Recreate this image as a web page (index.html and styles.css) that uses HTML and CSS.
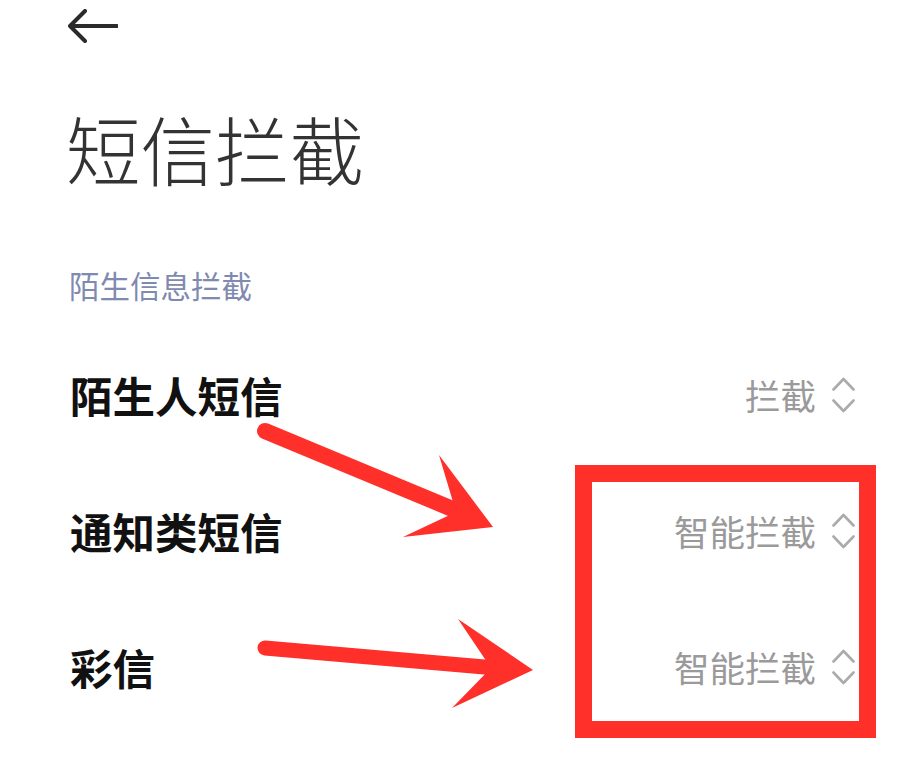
FILE: index.html
```html
<!DOCTYPE html>
<html lang="zh-CN">
<head>
<meta charset="utf-8">
<title>短信拦截</title>
<link rel="stylesheet" href="styles.css">
</head>
<body>
<div class="page">
  <div class="header">
    <svg class="back" width="50" height="34" viewBox="0 0 50 34">
      <path d="M17 2 L2 17 L17 32 M2 17 H49" fill="none" stroke="#2b2b2b" stroke-width="4" stroke-linecap="round" stroke-linejoin="round"/>
    </svg>
  </div>
  <h1 class="title">短信拦截</h1>
  <div class="section">陌生信息拦截</div>
  <div class="list">
    <div class="row">
      <span class="label">陌生人短信</span>
      <span class="value">拦截<svg class="chev" width="24" height="36" viewBox="0 0 24 36"><path d="M1.5 12.5 L11.5 2 L21.5 12.5 M1.5 23.5 L11.5 34 L21.5 23.5" fill="none" stroke="#ababab" stroke-width="2.6" stroke-linecap="round" stroke-linejoin="round"/></svg></span>
    </div>
    <div class="row">
      <span class="label">通知类短信</span>
      <span class="value">智能拦截<svg class="chev" width="24" height="36" viewBox="0 0 24 36"><path d="M1.5 12.5 L11.5 2 L21.5 12.5 M1.5 23.5 L11.5 34 L21.5 23.5" fill="none" stroke="#ababab" stroke-width="2.6" stroke-linecap="round" stroke-linejoin="round"/></svg></span>
    </div>
    <div class="row">
      <span class="label">彩信</span>
      <span class="value">智能拦截<svg class="chev" width="24" height="36" viewBox="0 0 24 36"><path d="M1.5 12.5 L11.5 2 L21.5 12.5 M1.5 23.5 L11.5 34 L21.5 23.5" fill="none" stroke="#ababab" stroke-width="2.6" stroke-linecap="round" stroke-linejoin="round"/></svg></span>
    </div>
  </div>
  <div class="highlight"></div>
  <svg class="annot" width="923" height="765" viewBox="0 0 923 765">
    <line x1="265" y1="431" x2="462" y2="513" stroke="#ff2f2a" stroke-width="16" stroke-linecap="round"/>
    <polygon points="439,455 493,527 403,537 456,512" fill="#ff2f2a"/>
    <line x1="265" y1="648" x2="496" y2="668" stroke="#ff2f2a" stroke-width="15" stroke-linecap="round"/>
    <polygon points="458,619 533,670 452,708 491,668" fill="#ff2f2a"/>
  </svg>
</div>
</body>
</html>
```
FILE: styles.css
```css
html, body {
  margin: 0;
  padding: 0;
  background: #ffffff;
}
body {
  font-family: "Noto Sans CJK SC", "Noto Sans", sans-serif;
  width: 923px;
  height: 765px;
  overflow: hidden;
}
.page {
  position: relative;
  width: 923px;
  height: 765px;
  box-sizing: border-box;
  padding: 0 67px 0 68px;
}
.header {
  padding-top: 9px;
  height: 34px;
}
.back {
  display: block;
}
.title {
  margin: 65px 0 0 -2px;
  font-size: 74.5px;
  line-height: 80px;
  font-weight: 300;
  color: #333333;
}
.section {
  margin-top: 77px;
  font-size: 30.5px;
  line-height: 40px;
  color: #7f8ab0;
  padding-left: 1px;
}
.list {
  margin-top: 22px;
}
.row {
  height: 136px;
  display: flex;
  align-items: center;
  justify-content: space-between;
}
.label {
  font-size: 42.5px;
  line-height: 50px;
  font-weight: 700;
  color: #111111;
  padding-left: 2px;
}
.value {
  display: flex;
  align-items: center;
  gap: 16px;
  font-size: 35.5px;
  line-height: 44px;
  color: #9a9a9a;
}
.chev {
  display: block;
}
.highlight {
  position: absolute;
  left: 575px;
  top: 465px;
  width: 301px;
  height: 273px;
  box-sizing: border-box;
  border: 17px solid #ff2f2a;
}
.annot {
  position: absolute;
  left: 0;
  top: 0;
  pointer-events: none;
}
```
